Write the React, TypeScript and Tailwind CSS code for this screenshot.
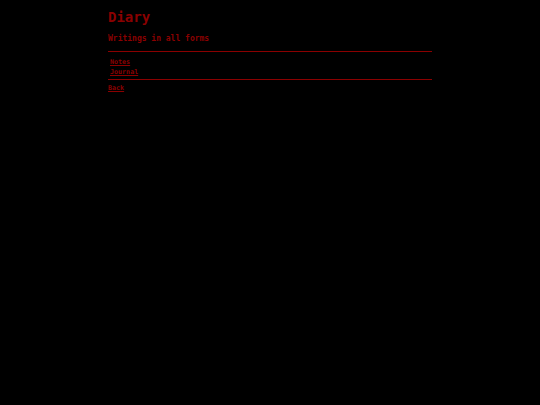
export default function App() {
  return (
    <div className="min-h-[405px] bg-black" style={{ fontFamily: '"DejaVu Sans Mono", monospace' }}>
      <div className="mx-auto w-[324px] pt-[9px] text-[#8b0000]">
        <h1 className="text-[14px] font-bold leading-[17px]">Diary</h1>
        <p className="mt-[8px] text-[8px] font-semibold leading-[10px]">Writings in all forms</p>
        <hr className="mt-[7px] border-t border-[#8b0000]" />
        <ul className="pt-[5px] pb-[2px] pl-[2px] text-[6.7px] font-bold leading-[10px]">
          <li>
            <a href="#" className="underline">Notes</a>
          </li>
          <li>
            <a href="#" className="underline">Journal</a>
          </li>
        </ul>
        <hr className="border-t border-[#8b0000]" />
        <a href="#" className="mt-[3px] block text-[6.7px] font-bold leading-[10px] underline">Back</a>
      </div>
    </div>
  );
}
